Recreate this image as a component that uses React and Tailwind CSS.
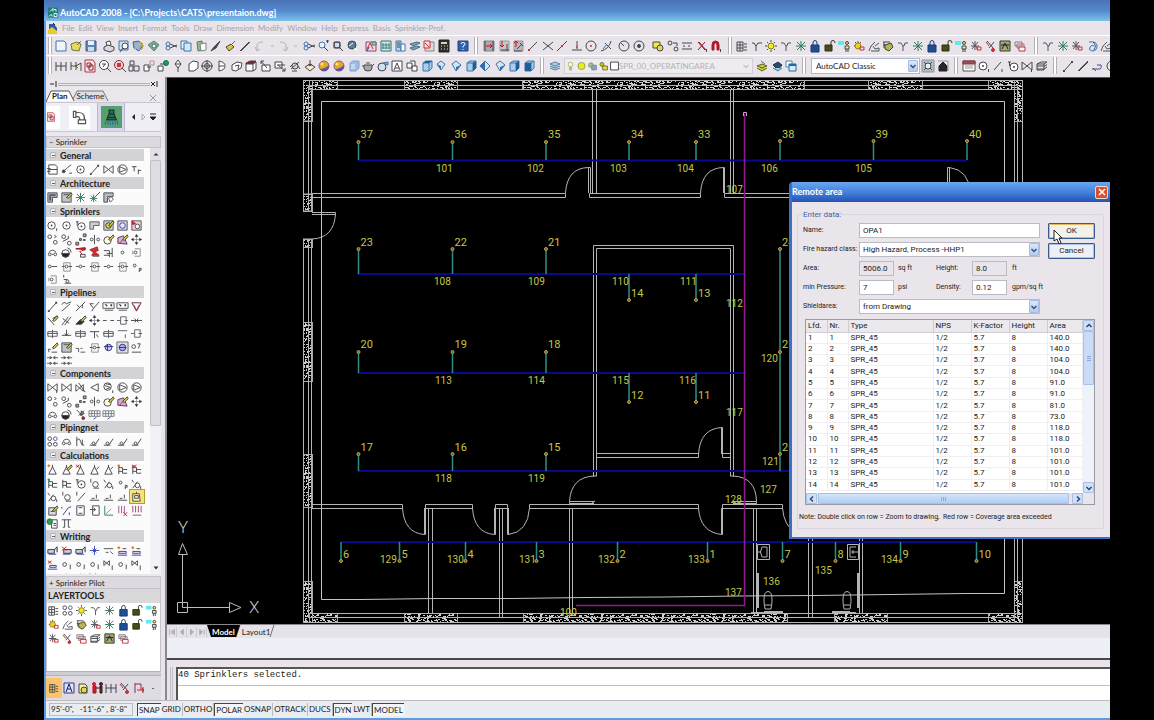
import React, { useState } from 'react';
import classNames from 'clsx';

const circle = (x, y, r) => `M${x - r} ${y}a${r} ${r} 0 1 0 ${2 * r} 0a${r} ${r} 0 1 0 ${-2 * r} 0`;

const INK = '#46464c';
const RED = '#c8303a';
const YEL = '#d8c83a';
const TEAL = '#2f7d5f';
const BLUE = '#3f74b0';
const SKY = '#a9cdea';

// Shared pieces: [path, fill, stroke]
const PENCIL = ['M7 7L12 2L13 4L9 8Z', YEL, INK];
const SUB = ['M11.500 10v3', 'none', INK];
const CUBE = ['M3 4L6 2H12V9L9 12H3ZM3 4H9V12M9 4L12 2', SKY, BLUE];
const SHEETS = ['M2 5L6 3H12L9 5ZM2 7.500L3 7H10L12 5.500M2 10L9 10L12 8M2 5V11H9V5', 'none', INK];
const LAYERS = ['M2 3H8M2 6H8M2 9H8M2 12H8M2 3V12M8 3V12M5 3V12', 'none', INK];
const VALVE = ['M2 3V11L12 3V11Z', 'none', INK];
const CONE = ['M7 4L3 12H11ZM7 2V5', 'none', INK];
const TREE = ['M3 3V12M3 5H7M3 9H7M7 7H12M7 11H12M7 5V11', 'none', INK];

// Every glyph sits on a 14 x 14 grid
const GLYPHS = {
    new: [['M2 2H10L12 4V12H2Z', '#eef6fc', BLUE]],
    open: [['M2 5L8 3L12 5L10 12L3 11Z', '#e9d95a', '#6b7a50'], ['M8 6L12 2', 'none', BLUE]],
    save: [['M2 2H12V12H2Z', '#5c86b8', '#3b5f90'], ['M4 2H10V6H4Z', '#e8f0f8', 'none'], ['M4 8H10V12H4Z', '#cfdcec', 'none']],
    print: [['M4 3L8 2L9 6L5 7Z', '#fff', INK], ['M2 8L6 6L12 8V11L8 13L2 11Z', '#d8d8de', INK]],
    preview: [['M2 2H11V11H2Z', '#cfe3f2', BLUE], [circle(8, 7, 3), '#fff', INK], ['M6 9L3 13', 'none', INK]],
    publish: [['M2 3L8 2L12 6L8 12L3 9Z', '#8fb0dc', '#44608c'], ['M4 10L9 4', 'none', YEL], ['M8 3a4 4 0 0 1 0 8', 'none', '#c8a020']],
    dwf: [['M2 6L8 2L13 6L8 12Z', '#7fae9a', '#5d7d72'], [circle(8, 7, 2), '#fff', TEAL]],
    cut: [['M6 5L13 8M6 9L13 6', 'none', INK], [circle(4, 5, 2), 'none', BLUE], [circle(4, 9, 2), 'none', BLUE]],
    copy: [['M2 2H8V10H2Z', '#e4f0fa', BLUE], ['M5 4H12V12H5Z', '#d5e8f6', BLUE]],
    paste: [['M3 3L8 2L9 11L4 12Z', '#9fb89a', '#5c7a60'], ['M6 5L12 4V11L7 12Z', '#fff', '#6a8a78']],
    brush: [['M3 12L6 8L12 2L8 9Z', '#4a4a50', INK]],
    match: [['M3 8L8 5L11 8L6 12Z', YEL, INK], ['M8 6L12 2', 'none', '#a05020']],
    pen: [['M2 12L11 3M3 12L6 9', 'none', INK], ['M5 10L12 3', 'none', INK]],
    undo: [['M4 12V7Q4 3 10 3M2 8L4 12L7 10', 'none', '#b5b1b8']],
    redo: [['M10 12V7Q10 3 4 3M12 8L10 12L7 10', 'none', '#b5b1b8']],
    tiny: [['M6 7H9', 'none', '#b5b1b8']],
    zoomin: [[circle(6, 6, 3), '#eaf2fa', BLUE], ['M8 8L12 12M10 2H13M11.500 1V4', 'none', INK]],
    zoomw: [[circle(6, 6, 3), '#cfe0ef', INK], ['M8 8L12 12M3 3H9V9H3Z', 'none', INK]],
    zoomp: [[circle(7, 6, 4), '#5d7d92', '#2f4a5c'], ['M9 9L13 12M4 7L8 4', 'none', '#fff']],
    props: [['M2 3H12V12H2Z', '#f0d8e0', '#8a4a6a'], ['M3 10L6 4L9 10', 'none', RED], ['M8 3H12V6H8Z', YEL, BLUE], ['M3 12L5 8', 'none', '#3038b0']],
    center: [['M2 2H12V12H2Z', '#cfe8e0', '#3c6c6c'], ['M4 4V10M7 4V10M10 4V10M3 6H11M3 9H11', 'none', '#3c8080']],
    toolp: [['M3 2H8V12H3Z', '#b8d4ec', BLUE], ['M8 5H12V12H8Z', '#fff', BLUE], ['M4 4H7M4 6H7M4 8H7', 'none', INK]],
    sheetset: [['M2 5L9 3L12 4L5 7ZM2 9L9 7L12 8L5 11Z', '#7fa6b8', '#466a80']],
    markup: [['M3 3H12V12H3Z', '#e0d8dc', '#888'], ['M2 2H8V9H2Z', '#fbe0e0', RED], ['M3 4L7 8', 'none', RED]],
    calc: [['M2 1H12V13H2Z', '#2e2e2a', '#222'], ['M4 3H10V5H4Z', '#d8d8b0', 'none'], ['M4 7H5M7 7H8M10 7H11M4 10H5M7 10H8M10 10H11', 'none', '#ddd']],
    help: [['M2 2H12V12H2Z', '#2f62b0', '#1f4280'], ['M5 5Q5 3.500 7 3.500T9 5Q9 6.500 7 7V8.500M7 10V11', 'none', '#fff']],
    temp: [['M2 2H12V12H2Z', '#a9a9ae', '#888'], ['M3 2V12M11 2V12', 'none', INK], ['M4 7H10M8 5L10 7L8 9', 'none', '#d01020']],
    from: [['M3 2H12V12H3Z', '#c8c4ca', '#999'], ['M4 11H12M10 5V12', 'none', INK], ['M5 2V8M3 6L5 8L7 6', 'none', '#d01020']],
    from2: [['M3 2H12V12H3Z', '#b9b7bd', '#999'], ['M3 12H11M9 4L12 7', 'none', INK], ['M5 2V8M3 4L5 2L7 4', 'none', '#d01020'], ['M6 10L10 6', 'none', INK]],
    endp: [['M3 11L11 3', 'none', INK], ['M2 10H4V12H2Z', RED, 'none']],
    inter: [['M2 3L12 11M12 3L2 11', 'none', INK]],
    mid: [['M2 12L12 2', 'none', INK], ['M6 6H8V8H6Z', RED, 'none']],
    perp: [['M7 2V10M2 11H12', 'none', INK], ['M6 8H8', 'none', RED]],
    circ: [[circle(7, 7, 5), 'none', INK], [circle(7, 7, 1), RED, 'none']],
    circsm: [[circle(7, 7, 4), '#fff', INK], [circle(7, 7, 1), INK, 'none']],
    tangent: [['M2 12Q10 10 12 2M6 4L12 10', 'none', INK], ['M4 10L8 5', 'none', BLUE]],
    quad: [[circle(7, 7, 5), 'none', INK], ['M4 4L7 7', 'none', INK]],
    node: [[circle(7, 7, 5), 'none', INK], [circle(7, 7, 1.5), INK, INK]],
    ins: [['M2 3H9V9H2Z', '#f0e84a', INK], [circle(9, 9, 3), '#e0d860', INK]],
    near: [[circle(4, 4, 2), 'none', INK], [circle(10, 10, 2), 'none', INK], ['M7 4H11V7', 'none', INK]],
    par: [['M2 4H12M2 10H12M3 7H5M8 7H10', 'none', INK]],
    none: [['M3 3L10 11M10 3L3 11', 'none', '#a01020'], ['M4 3L11 11', 'none', '#a01020'], SUB],
    magnet: [['M3 11V6Q3 2 6.500 2T10 6V11H8V6Q8 4 6.500 4T5 6V11Z', '#b81828', '#a81828'], SUB],
    layer: [LAYERS, ['M9 5H12M9 8H12M9 11H12', 'none', INK]],
    layerplus: [['M2 4H4L6 7L8 4H12M6 7V12', 'none', INK]],
    sun: [[circle(7, 7, 3), '#f4ec20', '#807818'], ['M7 1V3M7 11V13M1 7H3M11 7H13M3 3L4 4M10 10L11 11M11 3L10 4M4 10L3 11', 'none', '#4a4a28']],
    branch: [['M2 4H5L7 7H8L9 4H12M7 7V12', 'none', '#55555c']],
    snow: [['M7 2V12M2 7H12M3 3L11 11M11 3L3 11', 'none', TEAL]],
    lock: [['M3 6H11V13H3Z', '#1f4e96', '#163a70'], ['M5 6V4Q5 1.500 7 1.500T9 4V6', 'none', '#163a70']],
    unlock: [['M2 6H9V12H2Z', '#4a4a1c', '#2e2e14'], ['M8 6V3Q8 1.500 10 1.500T12 4', 'none', '#3a3a1a']],
    person: [['M1 2H7V6H1Z', '#62e8f0', 'none'], [circle(10, 4, 1.5), '#ece050', INK], ['M8 7H12V10H8ZM9 10V13M11 10V13', '#e8e8b0', INK]],
    sunr: [[circle(6, 7, 3), '#f0d020', '#a08018'], ['M6 2V4M2 7H3M3 3L4 4M9 3L8 4', 'none', '#705010'], ['M8 8H12V11H8Z', 'none', RED]],
    hands: [['M2 12L4 7L8 3M4 12H12V9L8 10L6 7M8 7L12 4', 'none', '#55555c']],
    merge: [['M2 3H9M2 6H9M3 3V9', 'none', INK], ['M4 6L10 4L12 8L8 12L4 10Z', '#b8b458', '#44441c']],
    snowr: [['M6 2V11M2 7H10M3 3L9 10M9 3L3 10', 'none', '#54545c'], ['M8 8H12V11H8Z', 'none', RED]],
    kill: [['M3 2L10 10M10 3L5 9', 'none', INK], [circle(9, 11, 1.5), RED, RED], ['M2 3L5 7', 'none', RED]],
    walk: [['M2 2H12V12H2Z', '#a0a878', '#3a3a20'], ['M4 10L7 4L10 10M3 6H11', 'none', '#222']],
    sheetr: [['M2 3H9V7H2ZM4 5H11V9H4Z', '#f0e4e8', '#8a7a80'], ['M6 8H12V12H6Z', '#fff', RED]],
    sheets: [SHEETS],
    swirl: [['M4 3Q12 2 12 7T7 12Q3 11 5 8T9 7', 'none', BLUE], ['M8 3Q12 6 9 11', 'none', '#405068']],
    dim: [['M2 3V12M12 3V12M7 3V12M2 7H12', 'none', INK]],
    dimv: [['M2 3V11M7 3V11M2 7H7L12 4M12 4V12', 'none', INK], ['M7 7L9 9', 'none', '#806818']],
    redsheet: [['M2 1H10L12 4V13H2Z', '#fbeaea', '#b03040'], ['M4 4H8V8H4ZM6 6H10V11H6Z', 'none', '#882030']],
    zoomx: [[circle(6, 6, 4.5), '#fff', INK], ['M9 9L13 13M4 5H8M5 8L7 5', 'none', INK]],
    zoomred: [[circle(6, 6, 4.5), '#f4d0d0', '#8a2a30'], ['M9 9L13 13', 'none', INK], ['M4 4H8V8H4Z', '#c83840', 'none']],
    stack: [['M3 2H7V6H3ZM2 7H6V12H2ZM7 7H12V12H7Z', '#e8e4ea', INK]],
    plus: [['M2 6H7V12H2ZM5 8H9', '#fff', INK], ['M8 2H12V6H8Z', 'none', '#b89090']],
    plusg: [['M2 7H7V12H2Z', '#fff', INK], [circle(10, 4, 2.5), '#1f9a60', '#14724a'], ['M4 5H8', 'none', INK]],
    pin: [['M7 1L10 5L7 9L4 5ZM7 9V13M4 5H10', '#fff', INK]],
    box: [['M3 5L7 2L12 3V9L8 12H3Z', '#fff', INK]],
    target: [[circle(7, 7, 5), 'none', INK], [circle(7, 7, 2.5), 'none', INK], ['M7 1V13M1 7H13', 'none', INK]],
    half: [['M4 2V12Q10 11 10 7T4 2ZM4 7H9', '#fff', INK]],
    boxes: [['M2 6L7 3L12 4L11 9L6 12L2 11ZM5 7L9 6L8 10', '#fff', INK]],
    boxred: [['M2 4L6 2H12L9 5H2Z', '#8a2028', INK], ['M2 5H9V12H2ZM9 5L12 3V10L9 12', '#fff', INK]],
    edit1: [['M3 6H11V12H3Z', '#fff', INK], ['M2 2L8 9M2 2V5M2 2H5', 'none', INK]],
    edit2: [['M2 3H9V9H2Z', '#fff', INK], ['M5 6L12 12M12 9V12H9M4 6H12', 'none', INK]],
    gear: [[circle(7, 7, 3), '#ddd', INK], ['M3 10L11 3M4 12H9M5 5L2 8M10 7L12 10', 'none', INK]],
    tray: [['M2 8L7 5L12 8L7 12Z', '#f3ebc0', INK], ['M7 1V7M5 5L7 7L9 5', 'none', INK]],
    ball: [[circle(7, 7, 5), '#e8a81c', '#8a5a90'], ['M3 10Q8 10 12 6Q12 12 7 12Q4 12 3 10Z', '#5a50b0', 'none'], [circle(5, 5, 1.5), '#fbe68a', 'none']],
    cubef: [['M3 4L6 2H12V9L9 12H3Z', '#9fbce8', '#7fa0d8'], ['M4 5H8V10H4Z', '#c4d8f4', 'none']],
    pot: [['M3 6H11V9Q11 12 7 12T3 9ZM5 4H9M1 7H3M11 7L13 5', '#a8a8a8', INK]],
    orb: [[circle(6, 8, 4), '#cfe0f0', INK], ['M7 4L12 3V6Z', '#7fc8e0', BLUE]],
    letterA: [['M2 2H12V12H2Z', '#fff', INK], ['M4 11L7 4L10 11M5 9H9', 'none', INK]],
    cubes: [['M2 4H7V9H2ZM5 2H10V7M7 7H12V12H7Z', '#fff', INK]],
    view1: [CUBE, ['M3 4L6 2H12L9 4Z', '#1f5f98', 'none']],
    view2: [['M3 5L7 2L11 5L7 11Z', '#d4e6f4', BLUE], ['M3 5L7 11L7 7Z', '#2f6fb0', 'none']],
    view3: [['M3 5L7 2L12 6L7 12Z', '#d4e6f4', BLUE], ['M12 6L7 12L7 8Z', '#2f6fb0', 'none']],
    view4: [CUBE, ['M9 4L12 2V9L9 12Z', '#1f5f98', 'none']],
    view5: [['M7 2L12 7L7 12L2 7Z', '#d4e6f4', BLUE], ['M2 7L7 2V12Z', '#2f6fb0', 'none']],
    view6: [CUBE, ['M3 4H9V12H3Z', '#1f5f98', 'none']],
    bulb: [[circle(7, 5, 3), '#fbf7c0', '#b0a860'], ['M6 9H8V12H6Z', '#ddd', '#888']],
    sunbig: [[circle(7, 7, 4.5), '#e6f020', '#88903a']],
    lockg: [[circle(5, 6, 3), '#a8c0a8', '#708878'], ['M6 6H12V12H6Z', '#88a0b0', '#7888a0']],
    locky: [[circle(5, 5, 2.5), '#c8c820', '#606010'], ['M6 7H12V12H6Z', '#e0dc50', '#606010']],
    swatch: [['M2 2H12V12H2Z', '#fff', '#222']],
    laystack: [['M2 5L7 3L12 5L7 7ZM2 7L7 9L12 7M2 9L7 11L12 9', '#b8d0e0', '#5a80a0']],
    layback: [['M2 7L7 5L12 7L7 9ZM2 9L7 12L12 9', '#c8c840', '#606020'], ['M6 2L10 5', 'none', BLUE]],
    laydark: [['M3 6L8 3L12 6L8 11Z', '#2c4a70', '#1c3350'], ['M3 9L8 12L12 9', '#9cc', BLUE]],
    wins: [['M2 2H8V8H2Z', '#fff', '#4888b8'], ['M5 5H12V12H5Z', '#d8ecf8', '#2068a8'], ['M5 5H12V7H5Z', '#2068a8', 'none']],
    gearbox: [['M1 1H13V13H1Z', '#b4c0cc', '#8a949e'], [circle(7, 7, 3), '#eee', INK], ['M3 3L5 5M11 3L9 5M3 11L5 9M11 11L9 9', 'none', INK]],
    house: [['M3 7L7 3L11 7V12H3Z', '#26262a', '#222'], ['M2 2H12V12', 'none', '#999']],
    cal: [['M1 2H13V12H1Z', '#fff', '#555'], ['M1 2H13V5H1Z', '#a05058', '#803a40'], ['M3 7H11M3 9H11', 'none', '#999']],
    circs: [[circle(6, 7, 4), '#fff', INK], [circle(6, 7, 1), INK, 'none'], SUB],
    circt: [[circle(8, 8, 4), '#fff', INK], [circle(8, 8, 1), INK, 'none'], ['M2 3H5M3.500 3V7', 'none', INK]],
    lines: [['M3 11L10 3', 'none', INK], ['M11 10V13', 'none', INK]],
    line: [['M3 12L11 3', 'none', INK], ['M2 11H4V13H2ZM10 2H12V4H10Z', INK, 'none']],
    bold: [['M2 12L12 2M3 12L12 3', 'none', INK]],
    valve: [VALVE],
    valves: [VALVE, SUB],
    hook: [['M3 9L6 12M2 10H10Q12 9 11 6H7', 'none', '#405080']],
    sheet: [['M3 2H10L12 4V12H3ZM3 7H12M1 6H5M1 9H5', '#fff', INK]],
    nodes: [['M3 10L8 5L12 2', 'none', INK], [circle(4, 9, 1.5), INK, INK], ['M10 11H13', 'none', INK]],
    circplus: [[circle(7, 7, 5), '#fff', INK], ['M4 4V10L11 7Z', 'none', INK]],
    tr: [['M2 4H7M4.500 4V9M9 7V12M9 8H12', 'none', INK]],
    room: [['M2 2H12V7H7V12H2ZM4 4H10V5H5V10H4Z', '#b8bcc0', '#4c5058']],
    roomy: [['M2 2H12V12H7L2 12ZM4 4H10', '#c0c4c8', '#4c5058'], PENCIL],
    stary: [['M6 4V12M2 8H10M3 5L9 11M9 5L3 11', 'none', TEAL], ['M8 6L13 1', 'none', '#a02020']],
    room2: [['M2 2H12V6H6V12H2Z', '#b8bcc0', '#4c5058'], ['M7 8L10 6L12 9L9 12Z', '#fff', '#4c5058']],
    ell: [['M2 3H12V7H6V11H2Z', '#c9cdd0', '#5b5f66']],
    roomc: [['M2 2H12V12H2Z', '#d5d5e0', '#50505a'], [circle(7, 7, 3), '#e8e8ff', '#3c3ca0']],
    roomcy: [['M2 2H12V12H2Z', '#d5d5d0', '#50505a'], [circle(7, 7, 3), '#d8d860', '#30301c'], PENCIL],
    roomr: [['M2 2H12V12H2Z', '#e5d5d5', '#50505a'], [circle(8, 8, 2.5), '#fff', INK], ['M2 2L6 5L3 6Z', '#d02020', '#d02020']],
    pair: [[circle(4, 4, 2), '#fff', INK], [circle(10, 10, 2), '#fff', INK], ['M9 2L11 4L9 5', 'none', INK]],
    pair2: [[circle(4, 4, 2), '#fff', INK], [circle(10, 11, 2), '#fff', INK], ['M3 9L9 6M9 3V6', 'none', INK]],
    diag: [['M2 10H5V13H2ZM6 6H8V8H6ZM10 1H13V4H10ZM10 7H12V8H10Z', '#aaa', INK]],
    mirror: [['M7 2V12', 'none', INK], [circle(4, 7, 1.5), '#fff', INK], [circle(11, 7, 1.5), '#fff', INK]],
    circy: [[circle(6, 8, 4), '#fbfbe0', INK], PENCIL],
    paint: [['M2 11V5L8 3L12 12Z', '#c8b0d8', '#60305c'], ['M3 12L12 2', 'none', RED], PENCIL],
    move: [['M7 2V12M2 7H12', 'none', '#9a9aa0'], ['M5 4L7 1L9 4ZM5 10L7 13L9 10ZM4 5L1 7L4 9ZM10 5L13 7L10 9Z', '#333', 'none']],
    glasses: [['M3 7Q7 2 11 7', 'none', INK], [circle(4, 9, 1.5), '#fff', INK], [circle(10, 9, 1.5), '#fff', INK], ['M6 9H8', 'none', INK]],
    ballh: [[circle(6, 8, 4), '#fff', INK], ['M2 8H10Q10 12 6 12T2 8Z', '#222', INK], ['M8 2Q12 3 12 7', 'none', INK]],
    redtri: [['M2 3L12 2V4L6 6L11 11', 'none', '#c82028'], ['M2 3L12 2V4Z', '#d02028', '#a81820'], ['M7 9H12V12H7Z', '#eee', INK]],
    redflag: [['M2 4L10 1L11 5L7 6L12 10H4L6 7Z', '#d03038', '#a82028'], ['M5 11H12', 'none', INK]],
    tee: [['M2 5H8M2 10H8M8 5V12M11 2V12M5 8H11', 'none', INK]],
    dot: [[circle(7, 7, 1.5), '#fff', INK]],
    bracket: [['M5 3H11V11H5M3 5V9', 'none', '#8a8a90'], [circle(6, 7, 1.5), '#fff', INK]],
    dash: [[circle(4, 7, 1.5), '#fff', INK], ['M6 7H12', 'none', INK]],
    dashc: [[circle(7, 7, 1.5), '#fff', INK], ['M2 7H5M9 7H12', 'none', INK]],
    dashb: [['M4 3H11V12H4Z', 'none', '#8a8a90'], [circle(7, 7, 1.5), '#fff', INK], ['M2 7H5M9 7H13', 'none', INK]],
    dotp: [[circle(5, 6, 1.5), '#fff', INK], ['M10 9V13M10 9H12V11H10', 'none', INK]],
    onoff: [['M4 2V5M4 7H8M5 11H12', 'none', INK], [circle(8, 9, 1.5), '#fff', INK]],
    link2: [['M2 12L11 4M2 5Q4 1 7 4L12 2', 'none', INK]],
    link3: [['M2 12L8 6L12 2M3 5L6 8M9 5V9', 'none', INK]],
    link4: [['M2 4L6 9L12 2M6 9L4 12M2 4H6', 'none', INK]],
    plug: [['M1 3H13V9H1ZM3 5H5M9 5H11M3 11H12', '#fff', '#50505a'], [circle(5, 6, 1), INK, 'none'], [circle(10, 6, 1), INK, 'none']],
    vred: [['M2 3H12L7 12Z', '#fff', '#503038'], ['M4 5L7 11L10 5', 'none', RED]],
    split: [['M2 4L9 12M7 5L12 2', 'none', INK], PENCIL],
    offset: [['M2 12L9 3M5 12L12 3M3 5L10 10', 'none', INK]],
    brushp: [['M2 11L7 6L11 8L8 11Z', '#303030', INK], PENCIL],
    gap: [['M1 7H5M9 7H13', 'none', INK]],
    gapb: [['M1 7H5M9 7H13M5 3H11V11H5Z', 'none', '#5c5c64']],
    arrows: [['M1 7H13M5 5L7 7L5 9M9 5L7 7L9 9', 'none', INK]],
    weld: [['M2 5H12V10H2ZM7 3V12M1 7H13', 'none', '#5c5c64']],
    tup: [['M7 3V9M2 9H12M5 7L7 9L9 7', 'none', INK]],
    tdown: [['M2 5H12M7 5V12M9 8L11 11', 'none', INK]],
    dashs: [['M2 4H12M10 8V12', 'none', '#5c5c64']],
    numy: [['M2 9H5M3 9V12M6 12H12M7 9L9 7', 'none', INK], PENCIL],
    num: [['M2 8H5V12M7 12H12M7 8H9', 'none', '#50505a']],
    pump: [[circle(7, 7, 3.5), '#d0d0f0', '#303080'], ['M2 6H12M6 4V10', 'none', '#303080']],
    pumpb: [['M1 1H13V13H1Z', '#dcdcec', '#666'], [circle(7, 7, 3.5), '#b0b0e0', '#303080'], ['M3 7H11', 'none', '#303080']],
    o7: [['M2 12H12M8 3H11L9 8', 'none', INK], [circle(4, 6, 2), '#fff', INK]],
    swap: [['M1 4H5M9 4H13M1 10H5M9 10H13', 'none', '#5c5c64'], ['M4 2L7 4L4 6ZM10 2L7 4L10 6ZM4 8L7 10L4 12ZM10 8L7 10L10 12Z', '#5c5c64', 'none']],
    valvex: [['M2 4V11L10 4V11Z', '#fff', INK], ['M5 2L12 12', 'none', INK]],
    tri: [['M11 3V11L3 7Z', '#fff', INK]],
    pumps: [[circle(6, 6, 4), '#fff', INK], ['M3 5L9 7L4 9M4 3L9 4', 'none', INK], SUB],
    tools: [['M3 2L11 11M11 3L5 8', 'none', '#b02028'], ['M8 3L11 6L7 8Z', '#40a060', INK], [circle(10, 11, 1.5), '#a03030', INK]],
    grid: [['M1 3H13V9H1ZM1 6H13M4 3V9M7 3V9M10 3V9', 'none', '#7c7c84'], ['M6 12L9 10', 'none', '#3050b0']],
    net: [[circle(4, 4, 2), '#fff', INK], [circle(10, 4, 2), '#fff', '#4a58a0'], [circle(4, 10, 2), '#fff', INK], [circle(10, 10, 2), '#fff', INK]],
    nlet: [['M3 2V12M3 6Q6 2 7 7T11 11M9 5V11', 'none', INK]],
    slopen: [['M2 11H9M4 9L8 10L12 4', 'none', INK], [circle(6, 9, 1.5), '#fff', INK]],
    cone: [CONE, ['M9 7L12 4', 'none', INK]],
    coneo: [CONE, [circle(3, 3, 1), '#e07820', '#e07820']],
    coney: [CONE, PENCIL],
    conex: [CONE, ['M2 2L6 5M6 2L2 5', 'none', '#d02020']],
    tree: [TREE],
    treeo: [TREE, [circle(3, 3, 1), '#e07820', '#e07820']],
    treex: [TREE, ['M2 2L7 5M7 2L2 5', 'none', '#d02020']],
    treeg: [TREE, [circle(3, 3, 1), '#30a040', '#30a040']],
    onec: [['M3 2V6M6 12H12', 'none', INK], [circle(8, 8, 3), '#fff', INK]],
    oneb: [['M2 3L4 6M3 12L8 5', 'none', INK], [circle(8, 9, 2.5), '#fff', INK], SUB],
    oneline: [['M3 2V6M4 12L12 3', 'none', INK]],
    base: [['M2 11H12M4 9H7M9 5V9', 'none', INK]],
    bag: [['M3 4H10L11 12H3Z', '#fdf6c8', INK], ['M5 6H9V9H5ZM7 2V4', 'none', INK]],
    calcy: [['M3 4H11V12H3Z', '#ddd', INK], ['M5 8H9', 'none', INK], PENCIL],
    plot: [['M3 12L9 4M2 3V5M10 9V12', 'none', '#3a3a98'], ['M9 4L12 3', 'none', INK]],
    doc: [['M3 2H11V12H3Z', '#fff', INK], ['M5 4H9M5 10H9', 'none', INK]],
    docs: [['M5 2H12V12H5ZM2 6H8M6 4L8 6L6 8', '#fff', INK]],
    angle: [['M3 2V12H12', 'none', TEAL], ['M4 11L10 5', 'none', '#60b040']],
    bars: [['M3 2V10M6 2V10M9 2V10', 'none', '#a05090'], ['M8 9L12 13M12 9L8 13', 'none', '#c02030']],
    barsp: [['M3 2V9M6 2V9M9 2V9M12 2V9M3 12H12', 'none', '#a04070']],
    xls: [['M6 3H12V12H6Z', '#fff', INK], [circle(4, 5, 3), '#3a9a50', '#207838'], ['M8 7H11M8 9H11', 'none', INK]],
    pi: [['M2 3H12M5 3V11H3M9 3V11H11', 'none', INK]],
    tag: [['M2 6H9V10H2ZM9 6L12 3V9', '#d0d0d8', '#33334a'], ['M3 11H11', 'none', '#3a3a98']],
    tagx: [['M4 6H12V10H4Z', '#d0d0d8', '#33334a'], ['M2 3L7 7M7 3L2 7', 'none', '#d02020'], ['M3 11H11', 'none', '#3a3a98']],
    spark: [['M7 2V12M2 7H12M5 5L9 9M9 5L5 9', 'none', '#3a4ab0']],
    nums: [['M2 5H12M4 9H7M9 8L12 11', 'none', '#50505a']],
    label: [['M2 12H12M3 8H11V10H3Z', 'none', '#3a3a98'], [circle(3, 4, 1), '#e07820', '#e07820'], ['M7 5H11', 'none', INK]],
    labelx: [['M2 12H12M4 8H11V10H4Z', 'none', '#3a3a98'], ['M2 3L6 6M6 3L2 6', 'none', '#d02020']],
    o1: [[circle(5, 7, 2), '#fff', INK], ['M11 7V12', 'none', INK]],
    v1: [['M2 3V8L8 3V8Z', 'none', INK], ['M11 8V13', 'none', INK]],
    bluea: [['M2 2H12V12H2Z', '#dfe4f8', '#2c3890'], ['M4 11L7 3L10 11M5 8H9', 'none', '#181c60']],
    docy: [['M3 3H9L11 5V12H3Z', '#f6f2a0', INK], [circle(8, 9, 3), '#e0d840', INK]],
    men: [[circle(4, 3, 1.5), '#d02030', '#d02030'], ['M3 5H6V12H3Z', '#d02030', '#a01020'], [circle(11, 3, 1.5), '#a01020', '#222'], ['M10 5H12V12H10ZM6 7H10', '#a01020', '#222']],
    dimred: [['M3 2V12M11 6V12M3 3H9V9', 'none', '#903040'], ['M5 9H12M10 7L12 9L10 11', 'none', '#d02030']],
    elbow: [['M2 2H4V7H2ZM4 3Q12 2 11 9H7Q8 6 4 6ZM6 9H12V12H6Z', '#fff', '#555']],
    bottle: [['M5 1H9V4L11 9H3L5 4ZM5 4H9M4 7H10', '#2f6a50', '#16382a'], ['M2 10V13M4 10V13M6 10V13M8 10V13M10 10V13M12 10V13', 'none', '#2c6ab8']],
};

function Glyph({ name, className = 'w-3.5 h-3.5' }) {
    return (
        <svg viewBox="0 0 14 14" aria-hidden="true" className={classNames('shrink-0', className)}>
            {GLYPHS[name].map(([d, fill = 'none', stroke = INK], i) => (
                <path key={i} d={d} fill={fill} stroke={stroke} strokeWidth="1" />
            ))}
        </svg>
    );
}

function IconGroup({ icons, className }) {
    return (
        <div className={classNames('flex shrink-0 items-center justify-between', className)}>
            {icons.split(' ').map((name, i) => (
                <button key={i} type="button" aria-label={name} className={name === 'tiny' ? '-mx-1' : undefined}>
                    <Glyph name={name} />
                </button>
            ))}
        </div>
    );
}

const Grip = ({ className }) => (
    <div className={classNames('h-[17px] w-1 shrink-0 border-x border-[#b4b0b8] bg-white', className)} />
);

function ComboArrow() {
    return (
        <span className="pointer-events-none absolute inset-y-px right-px flex w-[10px] items-center justify-center rounded-[1px] border border-[#a5bbe0] bg-linear-to-b from-[#dbe7fb] to-[#b4cbf0]">
            <svg viewBox="0 0 8 8" className="h-2 w-2"><path d="M1.500 3L4 5.500L6.500 3" fill="none" stroke="#3c4f78" strokeWidth="1.500" /></svg>
        </span>
    );
}

const MENUS = ['File', 'Edit', 'View', 'Insert', 'Format', 'Tools', 'Draw', 'Dimension', 'Modify', 'Window', 'Help', 'Express', 'Basis', 'Sprinkler-Prof.'];

function Toolbars() {
    return (
        <div className="shrink-0 overflow-hidden bg-[#e8e4e9]">
            <div className="flex h-5 items-center border-t border-white">
                <Grip className="ml-[2px]" />
                <IconGroup className="ml-[2px] w-[44px]" icons="new open save" />
                <IconGroup className="ml-1 w-[58px]" icons="print preview publish dwf" />
                <IconGroup className="ml-1 w-[88px]" icons="cut copy paste brush match pen" />
                <IconGroup className="ml-px w-[45px]" icons="undo tiny redo tiny" />
                <IconGroup className="ml-1 w-[57px]" icons="cut zoomin zoomw zoomp" />
                <IconGroup className="ml-[5px] w-[87px]" icons="props center toolp sheetset markup calc" />
                <IconGroup className="ml-[5px] w-[14px]" icons="help" />
                <Grip className="ml-1" />
                <IconGroup className="ml-1 w-[131px]" icons="temp from from2 endp inter mid perp circ tangent" />
                <IconGroup className="ml-1 w-[29px]" icons="quad node" />
                <IconGroup className="ml-[5px] w-[72px]" icons="ins near par none magnet" />
                <Grip className="ml-[5px]" />
                <IconGroup
                    className="ml-[3px] w-[292px]"
                    icons="layer layerplus sun branch snow lock unlock person sunr hands merge branch snow lock unlock person snowr kill walk sheetr"
                />
                <Grip className="ml-[7px]" />
                <IconGroup className="ml-[3px] w-[72px]" icons="branch snow snowr swirl hands" />
            </div>
            <div className="flex h-5 items-center border-t border-white">
                <Grip className="ml-[2px]" />
                <IconGroup
                    className="ml-[2px] w-[482px]"
                    icons="dim dimv redsheet zoomx zoomred stack plus plusg pin box target half boxes boxred edit1 edit2 gear tray ball ball cubef pot orb letterA cubes view1 view2 view3 view4 view5 view3 view4 view6"
                />
                <Grip className="ml-1" />
                <IconGroup className="ml-1 w-[14px]" icons="laystack" />
                <div className="relative ml-[2px] flex h-4 w-[189px] shrink-0 items-center border border-[#d4d0d6] bg-[#efecf0]">
                    <div className="flex w-[52px] shrink-0 justify-between">
                        {['bulb', 'sunbig', 'lockg', 'locky', 'swatch'].map(n => <Glyph key={n} name={n} className="h-3 w-[11px]" />)}
                    </div>
                    <select aria-label="Layer" disabled className="block h-full min-w-0 flex-1 appearance-none bg-transparent pl-[2px] text-[8px] text-[#b5b1b8] opacity-100">
                        <option>SPR_00_OPERATINGAREA</option>
                    </select>
                    <svg viewBox="0 0 8 8" className="h-2 w-3"><path d="M1.500 3L4 5.500L6.500 3" fill="none" stroke="#b8cbe4" strokeWidth="1.500" /></svg>
                </div>
                <IconGroup className="ml-[2px] w-[43px]" icons="layback laydark wins" />
                <Grip className="ml-1" />
                <div className="relative ml-[5px] h-4 w-[109px] shrink-0 border border-[#a9b8cc] bg-white">
                    <select aria-label="Workspace" className="block h-full w-full appearance-none pl-1 text-[8px] text-[#222]">
                        <option>AutoCAD Classic</option>
                    </select>
                    <ComboArrow />
                </div>
                <IconGroup className="ml-px w-[29px]" icons="gearbox house" />
                <Grip className="ml-1" />
                <IconGroup className="ml-1 w-[87px]" icons="cal circs lines circt valves sheets" />
                <Grip className="ml-1" />
                <IconGroup className="ml-1 w-[58px]" icons="line bold hook circ" />
            </div>
        </div>
    );
}

const SECTIONS = [
    { title: 'General', height: 'h-[14px]', icons: 'sheet nodes circsm line valve circplus tr' },
    { title: 'Architecture', height: 'h-[14px]', icons: 'room roomy snow stary room2' },
    {
        title: 'Sprinklers',
        height: 'h-[67px]',
        icons: 'circs circsm circt ell roomcy roomc roomr pair pair2 diag mirror circy paint move glasses ballh redtri redflag tee dot bracket dash dashb dashc dashb dashc dashb dotp bracket onoff',
    },
    {
        title: 'Pipelines',
        height: 'h-[67px]',
        icons: 'line link2 link3 link4 plug plug vred split offset brushp move gap gapb arrows weld tup weld tdown weld dashs gapb numy roomy num dashb pump pumpb o7 swap swap',
    },
    {
        title: 'Components',
        height: 'h-[40px]',
        icons: 'valves valve valvex tri pumps circplus circplus pair pair2 diag mirror circy paint move glasses ballh tools grid grid',
    },
    { title: 'Pipingnet', height: 'h-[14px]', icons: 'net glasses nlet slopen slopen slopen slopen' },
    {
        title: 'Calculations',
        height: 'h-[67px]',
        icons: 'coneo coney conex cone cone treeo treex treeg tree circt onec oneb dotp oneb oneb onec oneline base base base bag calcy plot doc docs angle bars barsp xls pi',
    },
    {
        title: 'Writing',
        height: 'h-[40px]',
        icons: 'tag tagx tag spark nums label label labelx o1 o1 o1 v1 o1 v1 base tup tup v1',
    },
];

function PaletteSection({ title, height, icons }) {
    const [open, setOpen] = useState(true);

    return (
        <section>
            <button
                type="button"
                onClick={() => setOpen(!open)}
                className="flex h-[14px] w-full items-center border-b-2 border-white bg-[#d3d2d5] pl-1 text-[9px] leading-none font-bold text-[#222]"
            >
                <span className="mr-1 flex h-[6px] w-[6px] items-center justify-center rounded-[1px] border border-[#b0b4bc] bg-[#eef0f4]">
                    <span className="h-px w-[3px] bg-[#666]" />
                </span>
                {title}
            </button>
            {open && (
                <div className={classNames('grid grid-cols-7 content-between overflow-visible', height)}>
                    {icons.split(' ').map((name, i) => (
                        <button
                            key={i}
                            type="button"
                            aria-label={name}
                            className={classNames('h-[13px] w-[14px]', name === 'bag' && 'bg-[#f8e27a] outline outline-[#b89a30]')}
                        >
                            <Glyph name={name} className="h-[13px] w-[13px]" />
                        </button>
                    ))}
                </div>
            )}
        </section>
    );
}

const LAYER_TOOLS = 'layer net sun branch snow lock unlock person sunr hands merge snowr snow lock unlock person snowr kill sheetr sheets walk sheetr';

function Palette() {
    return (
        <aside className="flex w-[115px] shrink-0 flex-col overflow-hidden bg-[#ebe8ed] text-[8px]">
            <div className="mx-[3px] mt-[3px] flex h-[8px] shrink-0 items-center justify-between">
                <svg viewBox="0 0 8 8" className="h-2 w-2"><path d="M1 4H5M7 1V7" stroke="#222" /></svg>
                <div className="h-[3px] w-[92px] border-y border-[#b4b2b8]" />
                <svg viewBox="0 0 8 8" className="h-2 w-2"><path d="M1 2L5 6M5 2L1 6M7 1V7" stroke="#222" /></svg>
            </div>
            <div className="mt-[2px] flex h-[12px] shrink-0 items-end">
                <div className="relative">
                    <svg viewBox="0 0 66 12" className="h-3 w-[66px]">
                        <path d="M26 11L31 1H57L62 11" fill="#e0dde4" stroke="#777" />
                        <path d="M0 12L5 1H23L28 11" fill="#fbfbfd" stroke="#555" />
                    </svg>
                    <div className="absolute inset-0 flex items-center leading-none">
                        <button type="button" className="pl-[6px] font-bold">Plan</button>
                        <button type="button" className="pl-[9px]">Scheme</button>
                    </div>
                </div>
                <div className="flex flex-1 justify-end pr-1 text-[#999]">
                    <svg viewBox="0 0 8 8" className="h-2 w-2"><path d="M1 1L7 7M7 1L1 7" stroke="#999" /></svg>
                </div>
            </div>
            <div className="flex h-[30px] shrink-0 items-center border-y border-[#c9c6cf] bg-[#f0eff5]">
                <button type="button" aria-label="Valve palette" className="h-[23px] w-[14px] bg-white"><Glyph name="redsheet" className="h-4 w-2.5" /></button>
                <button type="button" aria-label="Fitting palette" className="ml-[9px] flex h-[23px] w-[21px] items-center justify-center bg-white">
                    <Glyph name="elbow" className="h-[17px] w-[17px]" />
                </button>
                <span className="ml-[7px] flex h-full w-[28px] items-center justify-center border-x border-[#b9b6d0] bg-[#d9d7ea]">
                    <button type="button" aria-label="Sprinkler palette" className="flex h-[22px] w-[21px] items-center justify-center bg-[#56a070]">
                        <Glyph name="bottle" className="h-[17px] w-[17px]" />
                    </button>
                </span>
                <svg viewBox="0 0 28 10" className="ml-[5px] h-[10px] w-7">
                    <path d="M5 2L2 5L5 8Z" fill="#222" />
                    <path d="M12 2L15 5L12 8Z" fill="none" stroke="#aaa" />
                    <path d="M20 2H26M20 5H26L23 8Z" fill="#222" stroke="#222" />
                </svg>
            </div>
            <h2 className="mt-1 flex h-[12px] shrink-0 items-center border border-[#c4c2c8] bg-[#dcdade] pl-[2px]">– Sprinkler</h2>
            <div className="flex min-h-0 flex-1 bg-[#fbfbfc]">
                <div className="min-w-0 flex-1 overflow-hidden pt-px pr-[6px]">
                    {SECTIONS.map(section => <PaletteSection key={section.title} {...section} />)}
                </div>
                <div className="flex w-[11px] flex-col bg-[#f2f1f5]">
                    <button type="button" aria-label="Scroll up" className="flex h-3 items-center justify-center bg-[#e2e0e6]">
                        <svg viewBox="0 0 8 8" className="h-2 w-2"><path d="M1.500 5.500L4 3L6.500 5.500Z" fill="#333" /></svg>
                    </button>
                    <div className="h-[266px] rounded-[1px] border border-[#c0bec6] bg-[#dedce3]" />
                    <button type="button" aria-label="Scroll down" className="mt-auto flex h-3 items-center justify-center">
                        <svg viewBox="0 0 8 8" className="h-2 w-2"><path d="M1.500 2.500L4 5.500L6.500 2.500Z" fill="#333" /></svg>
                    </button>
                </div>
            </div>
            <h2 className="mt-[2px] flex h-[13px] shrink-0 items-center border border-[#c4c2c8] bg-[#dcdade] pl-[2px]">+ Sprinkler Pilot</h2>
            <div className="h-[82px] shrink-0 border-x border-[#c4c2c8] bg-white">
                <h3 className="flex h-[14px] items-center bg-[#d9d8db] pl-px text-[9px] font-bold text-[#222]">LAYERTOOLS</h3>
                <div className="grid h-[42px] w-[112px] grid-cols-8 content-between pt-px">
                    {LAYER_TOOLS.split(' ').map((name, i) => (
                        <button key={i} type="button" aria-label={name} className="h-[13px] w-[14px]">
                            <Glyph name={name} className="h-[13px] w-[13px]" />
                        </button>
                    ))}
                </div>
            </div>
            <div className="h-[5px] shrink-0 border-y border-[#b5b3ba] bg-[#cfcdd4]" />
            <div className="flex h-[24px] shrink-0 items-center bg-[#dedbe2]">
                <button type="button" aria-label="Layers" className="flex h-5 w-4 items-center justify-center bg-[#fbc46a]"><Glyph name="layer" className="h-3 w-3" /></button>
                <IconGroup className="w-[84px]" icons="bluea docy men dim kill dimred" />
                <span className="ml-[6px] h-px w-[2px] bg-[#666]" />
            </div>
        </aside>
    );
}

// Sprinkler heads: [x, y, pipe y, label, label baseline]
const HEADS = [
    [358.5, 142, 160, '37', 138], [452.5, 142, 160, '36', 138], [546, 142, 160, '35', 138],
    [629, 142, 160, '34', 138], [696, 142, 160, '33', 138], [780, 141, 160, '38', 138],
    [873.5, 141, 160, '39', 138], [967, 141, 160, '40', 138],
    [358.5, 249, 274, '23', 246], [452.5, 249, 274, '22', 246], [546, 249, 274, '21', 246], [780, 249, 352, '24', 246],
    [629, 300, 274, '14', 297], [696, 300, 274, '13', 297],
    [358.5, 352, 373, '20', 348], [452.5, 352, 373, '19', 348], [546, 352, 373, '18', 348], [780, 352, 454, '25', 348],
    [629, 402, 373, '12', 399], [696, 402, 373, '11', 399],
    [358.5, 454, 471, '17', 451], [452.5, 454, 471, '16', 451], [546, 454, 471, '15', 451], [780, 454, 471, '26', 451],
    [341, 561, 542, '6', 558], [399.5, 561, 542, '5', 558], [465.5, 561, 542, '4', 558], [536.5, 561, 542, '3', 558],
    [617.5, 561, 542, '2', 558], [707.5, 561, 542, '1', 558], [782.5, 561, 542, '7', 558], [835.5, 561, 542, '8', 558],
    [900.5, 561, 542, '9', 558], [976.5, 561, 542, '10', 558],
];

const PIPE_LABELS = [
    ['101', 436, 172], ['102', 527, 172], ['103', 610, 172], ['104', 677, 172], ['106', 761, 172], ['105', 855, 172],
    ['107', 726, 193], ['108', 434, 285], ['109', 528, 285], ['110', 612, 285], ['111', 680, 285], ['112', 726, 307],
    ['113', 435, 384], ['114', 528, 384], ['115', 612, 384], ['116', 679, 384], ['117', 726, 416], ['118', 435, 482],
    ['119', 528, 482], ['120', 761, 362], ['121', 762, 465], ['127', 760, 493], ['128', 725, 503], ['129', 380, 563],
    ['130', 447, 563], ['131', 519, 563], ['132', 598, 563], ['133', 688, 563], ['134', 881, 563], ['135', 815, 574],
    ['136', 763, 585], ['137', 725, 596], ['100', 560, 616],
];

// Insulated wall pieces: [x, y, width, height]
const HATCHES = [
    [303, 80, 9, 41], [303, 194, 9, 17], [303, 239, 9, 8], [303, 322, 9, 59], [303, 454, 9, 53], [303, 581, 9, 41],
    [309, 80, 28, 9], [404, 80, 53, 9], [522, 80, 282, 9], [868, 80, 54, 9], [988, 80, 34, 9], [1014, 80, 8, 41],
    [309, 613, 28, 9], [404, 613, 53, 9], [523, 613, 264, 9], [834, 613, 53, 9], [988, 613, 34, 9], [1014, 581, 8, 41],
];

// Scattered one pixel marks for the insulation fill
const makeSpecks = (count) => {
    let seed = 17;
    const next = (max) => {
        seed = (seed * 16807) % 2147483647;
        return seed % max;
    };
    return Array.from({ length: count }, () => [next(61), next(37), 1 + next(2)]);
};

const SPECKS = makeSpecks(620);

const WALLS = [
    // outer shell
    'M303.500 211V80.500H1022.500V622.500H303.500V239', 'M308.500 211V85.500H1017.500V617.500H308.500V239', 'M311.500 211V89.500H1014.500V613.500H311.500V239',
    'M303 211H312M303 239H312M303 121H312M303 194H312',
    // upper corridor wall
    'M312 193.500H565.500V197.500H312M589.500 193.500H700.500V197.500H589.500ZM1014 193.500H724.500V197.500H1014',
    'M592.500 89V193M596.500 89V193M730.500 89V193M733.500 89V193',
    // core room
    'M593.500 476V245.500H733.500V476M596.500 476V248.500H730.500V476M593 476H597M730 476H734',
    'M596 453.500H698.500V457.500H596M730 453.500H722.500V457.500H730',
    // lower corridor wall
    'M312 504.500H402.500V508.500H312M425.500 504.500H472.500V508.500H425.500ZM495.500 504.500H507.500V508.500H495.500ZM529.500 504.500H698.500V508.500H529.500ZM722.500 504.500H782.500V508.500H722.500Z',
    'M428.500 508V613M432.500 508V613M499.500 508V617M502.500 508V617M569.500 508V613M572.500 508V613M753.500 508V613M756.500 508V613M808.500 508V617M812.500 508V617M859.500 508V613M862.500 508V613',
    // doors
    'M312 212.500H335.500V214.500H312M335.500 214Q334 238 312 239',
    'M588.500 193V167.500H590.500V193M588.500 167.500Q567 168 565.500 193',
    'M723.500 193V167.500H724.500V193M723.500 167.500Q702 168 700.500 193',
    'M947.500 193V167.500H949.500V193M949.500 167.500Q969 170 970.500 193',
    'M721.500 454V427.500H722.500V454M721.500 427.500Q700 429 698.500 454',
    'M594 501.500H569.500V503.500H594M569.500 501.500Q571 477 594 476M592 503L595 501',
    'M733 501.500H756.500V503.500H733M756.500 501.500Q756 477 733 476',
    'M424.500 508V534.500H425.500V508M402.500 508Q404 533 424.500 534.500',
    'M494.500 508V534.500H495.500V508M472.500 508Q474 533 494.500 534.500',
    'M507.500 508V534.500H508.500V508M508.500 534.500Q528 532 529.500 508',
    'M721.500 508V534.500H722.500V508M698.500 508Q700 532 721.500 534.500',
    'M782.500 508Q784 526 795 532',
    // washrooms
    'M757.500 544.500H769.500V559.500H757.500ZM767 547H762Q759 552 762 557H767ZM757 552H761',
    'M847.500 544.500H858.500V559.500H847.500ZM856 547H850V557H856M851 552H858M853 550V554',
    'M757.500 573V608M758.500 573V608M857.500 573V608M858.500 573V608',
    'M764 611.500H783M751 612.500H783M832 612.500H856M832 611.500H850',
    'M764 600Q764 591.500 768 591.500T772 600Q772 605 771 609H765Q764 605 764 600ZM765 605H771M843 600Q843 591.500 847 591.500T851 600Q851 605 850 609H844Q843 605 843 600ZM844 605H850',
];

function FloorPlan() {
    return (
        <svg viewBox="167 78 943 546" preserveAspectRatio="xMinYMin slice" className="h-full w-full" role="img" aria-label="Floor plan">
            <defs>
                <pattern id="insulation" width="61" height="37" patternUnits="userSpaceOnUse">
                    {SPECKS.map(([x, y, w], i) => <rect key={i} x={x} y={y} width={w} height="1" fill="#cfcfcf" />)}
                </pattern>
            </defs>
            {HATCHES.map(([x, y, w, h], i) => (
                <rect key={i} x={x + 0.5} y={y + 0.5} width={w} height={h} fill="url(#insulation)" stroke="#a8a8a8" />
            ))}
            <g fill="none" stroke="#b4b4b4" strokeWidth="1">
                {WALLS.map((d, i) => <path key={i} d={d} />)}
                <path stroke="#c4c4c4" d="M321.500 599.500V101.500H1004.500V593.500H966L890 594.500L815 595.500L740 596L664 597L586 597.500L512 598.500L435 598.500L360 599.500Z" />
            </g>
            <path fill="none" stroke="#08088c" strokeWidth="2" d="M358 160.500H967M358 274H744M358 373H744M358 471H795M341 542H976" />
            <path fill="none" stroke="#94188e" strokeWidth="1.500" d="M744.500 114V605.500H576" />
            <path fill="none" stroke="#c8a8c8" d="M743.500 116V112.500H746.500V116" />
            {HEADS.map(([x, y, pipe, label, base]) => (
                <g key={label}>
                    <path stroke="#2f8f86" strokeWidth="1.500" d={`M${x} ${y}V${pipe}`} />
                    <circle cx={x} cy={y} r="1.500" fill="#6a5a20" stroke="#c0a850" />
                    <text x={x + 2} y={base} fill="#c4c844" className="font-[Roboto,sans-serif] text-[11px]">{label}</text>
                </g>
            ))}
            <g fill="#c4c844" className="font-[Roboto,sans-serif] text-[10px]">
                {PIPE_LABELS.map(([label, x, y]) => <text key={label} x={x} y={y}>{label}</text>)}
            </g>
            {/* UCS icon */}
            <g fill="none" stroke="#bcbcbc">
                <path d="M177.500 602.500H187.500V612.500H177.500ZM182.500 607.500V554M182.500 607.500H229M178.500 554.500H187.500L182.500 543.500ZM229.500 602.500V612.500L241 607.500Z" />
            </g>
            <g fill="#c4c4c4" className="font-[Roboto,sans-serif] text-[17px] font-light">
                <text x="178" y="533">Y</text>
                <text x="249" y="613">X</text>
            </g>
        </svg>
    );
}

const AREAS = ['140.0', '140.0', '104.0', '104.0', '91.0', '91.0', '81.0', '73.0', '118.0', '118.0', '101.0', '101.0', '101.0', '101.0'];

function ScrollButton({ d, label, className }) {
    return (
        <button type="button" aria-label={label} className={classNames('flex h-[11px] w-[11px] shrink-0 items-center justify-center rounded-[1px] border border-[#a9c0e6] bg-[#cfdff8]', className)}>
            <svg viewBox="0 0 8 8" className="h-2 w-2"><path d={d} fill="none" stroke="#33466e" strokeWidth="1.500" /></svg>
        </button>
    );
}

function SprinklerTable() {
    return (
        <div className="mt-[5px] w-[290px] border border-[#9a9aa0] bg-white">
            <div className="flex h-[173px]">
                <div className="min-w-0 flex-1 overflow-hidden">
                    <table className="h-[171px] w-full table-fixed border-collapse text-left leading-[10px] whitespace-nowrap">
                        <colgroup>
                            <col className="w-[21px]" />
                            <col className="w-[21px]" />
                            <col className="w-[85px]" />
                            <col className="w-[38px]" />
                            <col className="w-[38px]" />
                            <col className="w-[38px]" />
                            <col />
                        </colgroup>
                        <thead>
                            <tr className="h-3 bg-[#ece9ee]">
                                {['Lfd.', 'Nr.', 'Type', 'NPS', 'K-Factor', 'Height', 'Area'].map(h => (
                                    <th key={h} className="border-r border-b border-[#cfccd2] py-0 pr-0 pl-[2px] font-normal">{h}</th>
                                ))}
                            </tr>
                        </thead>
                        <tbody>
                            {AREAS.map((area, i) => (
                                <tr key={i}>
                                    {[i + 1, i + 1, 'SPR_45', '1/2', '5.7', '8', area].map((cell, c) => (
                                        <td key={c} className="border-r border-b border-[#f0eef1] py-0 pr-0 pl-[2px]">{cell}</td>
                                    ))}
                                </tr>
                            ))}
                        </tbody>
                    </table>
                </div>
                <div className="flex w-[11px] flex-col bg-[#eef2fb]">
                    <ScrollButton label="Scroll up" d="M1.500 5L4 2.500L6.500 5" />
                    <div className="flex h-[54px] flex-col items-center justify-center gap-px rounded-[1px] border border-[#a9c0e6] bg-[#c9dbf8]">
                        <span className="h-px w-1 bg-[#8ea8d8]" />
                        <span className="h-px w-1 bg-[#8ea8d8]" />
                        <span className="h-px w-1 bg-[#8ea8d8]" />
                    </div>
                    <ScrollButton label="Scroll down" className="mt-auto" d="M1.500 3L4 5.500L6.500 3" />
                </div>
            </div>
            <div className="flex h-[11px] bg-[#e9e5ea]">
                <ScrollButton label="Scroll left" d="M5 1.500L2.500 4L5 6.500" />
                <div className="mr-[3px] ml-px flex flex-1 items-center justify-center gap-px rounded-[1px] border border-[#a9c0e6] bg-linear-to-b from-[#d4e4fb] to-[#b2cdf4]">
                    <span className="h-1 w-px bg-[#8ea8d8]" />
                    <span className="h-1 w-px bg-[#8ea8d8]" />
                    <span className="h-1 w-px bg-[#8ea8d8]" />
                </div>
                <ScrollButton label="Scroll right" className="mr-[11px]" d="M3 1.500L5.500 4L3 6.500" />
            </div>
        </div>
    );
}

const LABEL = 'w-[56px] shrink-0 whitespace-nowrap text-[7px]';
const FIELD = 'h-[15px] border border-[#b9bcc4] pl-[3px] text-[8px] text-[#222]';

function RemoteAreaDialog() {
    const [form, setForm] = useState({
        name: 'OPA1',
        area: '5006.0',
        height: '8.0',
        pressure: '7',
        density: '0.12',
    });

    const handleChange = (e) => {
        const { name, value } = e.target;
        setForm(current => ({ ...current, [name]: value }));
    };

    return (
        <div role="dialog" aria-label="Remote area" className="absolute top-[104px] right-0 w-[321px] overflow-hidden rounded-tl-[4px] border-b-2 border-l-[3px] border-[#3d6fc4] bg-[#e9e5ea] font-[Roboto,'Liberation_Sans',sans-serif] text-[8px] text-[#222]">
            <div className="-ml-[3px] flex h-5 items-center justify-between bg-linear-to-b from-[#6aa6ee] via-[#4482dc] to-[#2452b4] pr-[2px] pl-[3px]">
                <h1 className="font-[Lato,sans-serif] text-[9px] font-bold text-white">Remote area</h1>
                <button type="button" aria-label="Close" className="flex h-[13px] w-[13px] items-center justify-center rounded-[2px] border border-[#f0d8d0] bg-[#d8502c]">
                    <svg viewBox="0 0 8 8" className="h-2 w-2"><path d="M1 1L7 7M7 1L1 7" stroke="#fff" strokeWidth="1.500" /></svg>
                </button>
            </div>
            <div className="mt-[12px] mr-[6px] mb-[8px] ml-[5px] rounded-[2px] border border-[#dad6de] pl-[5px]">
                <h2 className="-mt-[6px] w-fit bg-[#e9e5ea] leading-[12px] text-[#4460a8]">Enter data:</h2>
                <div className="mt-[2px] flex">
                    <div className="flex w-[237px] flex-col gap-[4px]">
                        <div className="flex items-center">
                            <label htmlFor="area-name" className={LABEL}>Name:</label>
                            <input id="area-name" name="name" value={form.name} onChange={handleChange} className={classNames(FIELD, 'min-w-0 flex-1 bg-white')} />
                        </div>
                        <div className="flex items-center">
                            <label htmlFor="hazard" className={LABEL}>Fire hazard class:</label>
                            <div className="relative flex flex-1">
                                <select id="hazard" className={classNames(FIELD, 'w-full appearance-none bg-white')}>
                                    <option>High Hazard, Process -HHP1</option>
                                </select>
                                <ComboArrow />
                            </div>
                        </div>
                        <div className="flex items-center">
                            <label htmlFor="area" className={LABEL}>Area:</label>
                            <input id="area" name="area" value={form.area} readOnly className={classNames(FIELD, 'w-[35px] bg-[#e9e5ea]')} />
                            <span className="w-[42px] pl-1 text-[7px]">sq ft</span>
                            <label htmlFor="height" className="w-[36px] text-[7px]">Height:</label>
                            <input id="height" name="height" value={form.height} readOnly className={classNames(FIELD, 'w-[35px] bg-[#e9e5ea]')} />
                            <span className="pl-[5px] text-[7px]">ft</span>
                        </div>
                        <div className="flex items-center">
                            <label htmlFor="pressure" className={LABEL}>min Pressure:</label>
                            <input id="pressure" name="pressure" value={form.pressure} onChange={handleChange} className={classNames(FIELD, 'w-[35px] bg-white')} />
                            <span className="w-[42px] pl-1 text-[7px]">psi</span>
                            <label htmlFor="density" className="w-[36px] text-[7px]">Density:</label>
                            <input id="density" name="density" value={form.density} onChange={handleChange} className={classNames(FIELD, 'w-[35px] bg-white')} />
                            <span className="w-0 pl-[5px] text-[7px] whitespace-nowrap">gpm/sq ft</span>
                        </div>
                        <div className="flex items-center">
                            <label htmlFor="shield" className={LABEL}>Shieldarea:</label>
                            <div className="relative flex flex-1">
                                <select id="shield" className={classNames(FIELD, 'w-full appearance-none bg-white')}>
                                    <option>from Drawing</option>
                                </select>
                                <ComboArrow />
                            </div>
                        </div>
                    </div>
                    <div className="ml-2 flex w-[47px] flex-col gap-1">
                        <button type="button" className="h-4 rounded-[1px] border border-[#3c5a8c] bg-[#f4f0ea] leading-none ring-1 ring-[#e2b860] ring-inset">OK</button>
                        <button type="button" className="h-4 rounded-[1px] border border-[#3c5a8c] bg-[#edf0f6] leading-none ring-1 ring-[#a9c4ec] ring-inset">Cancel</button>
                    </div>
                </div>
                <div className="pl-[2px]"><SprinklerTable /></div>
                <p className="mt-[6px] mb-[5px] -ml-1 text-[7px] leading-[12px] whitespace-pre">Note: Double click on row = Zoom to drawing,  Red row = Coverage area exceeded</p>
            </div>
            {/* mouse pointer */}
            <svg viewBox="0 0 10 16" className="absolute top-[47px] left-[261px] h-4 w-2.5">
                <path d="M1 1V12L4 10L6 15L8 14L6 9H9Z" fill="#fff" stroke="#222" />
            </svg>
        </div>
    );
}

function ModelTabs() {
    return (
        <div className="flex h-[14px] shrink-0 items-center border-t border-[#8a888e] bg-[#e6e3e8] text-[8px]">
            {['M3 2V8M8 2L5 5L8 8Z', 'M7 2L4 5L7 8Z', 'M4 2L7 5L4 8Z', 'M8 2V8M3 2L6 5L3 8Z'].map(d => (
                <button key={d} type="button" aria-label="Browse layouts" className="h-[10px] w-[10px] border-r border-[#ccc]">
                    <svg viewBox="0 0 10 10" className="h-full w-full"><path d={d} fill="#aaa8ae" stroke="#aaa8ae" /></svg>
                </button>
            ))}
            <div className="relative h-full">
                <svg viewBox="0 0 70 12" className="h-3 w-[70px]">
                    <path d="M29 12L33 0M63 12L67 0" stroke="#777" />
                    <path d="M0 0H33L29 12H4Z" fill="#000" />
                </svg>
                <div className="absolute inset-0 flex items-center leading-none">
                    <button type="button" className="pl-[5px] font-bold text-white">Model</button>
                    <button type="button" className="pl-[7px]">Layout1</button>
                </div>
            </div>
        </div>
    );
}

const MODES = [
    ['SNAP', true], ['GRID', false], ['ORTHO', false], ['POLAR', true], ['OSNAP', false],
    ['OTRACK', false], ['DUCS', false], ['DYN', true], ['LWT', false], ['MODEL', true],
];

function StatusBar() {
    return (
        <footer className="flex h-[18px] shrink-0 items-center border-t border-[#bdbabf] bg-[#e9ecf0] pl-[3px] text-[8px]">
            <div className="h-[13px] w-[84px] border border-[#b9bcc2] pl-px leading-[11px] whitespace-pre">95'-0",   -11'-6" , 8'-8"</div>
            <div className="ml-1 flex">
                {MODES.map(([mode, on]) => (
                    <button
                        key={mode}
                        type="button"
                        className={classNames('h-[13px] px-px leading-[11px]', on ? 'border-t border-l border-[#444] bg-[#f4f5f8]' : 'border-r border-[#b9bcc2]')}
                    >
                        {mode}
                    </button>
                ))}
            </div>
        </footer>
    );
}

export default function App() {
    return (
        <div className="h-screen overflow-hidden bg-black px-11 font-[Lato,'Liberation_Sans',sans-serif] text-[#222]">
            <div className="flex h-full flex-col border-b-2 border-l-2 border-[#5f9be0] bg-[#e8e4e9]">
                <header className="-ml-[2px] flex h-[21px] shrink-0 items-center bg-linear-to-b from-[#4a74b8] via-[#5488cc] to-[#7cc0ea] pt-1 pl-1">
                    <svg viewBox="0 0 10 10" className="h-[11px] w-[10px]">
                        <path d="M0 0H10V10H0Z" fill="#1f7a78" />
                        <path d="M2 4L5 1L5 4M6 2H8V4M1 9Q4 5 4 9M6 6H9V9H6Z" fill="none" stroke="#e8f4e8" />
                    </svg>
                    <h1 className="ml-[2px] text-[9px] font-bold text-white">AutoCAD 2008 - [C:\Projects\CATS\presentaion.dwg]</h1>
                </header>
                <nav className="flex h-[14px] shrink-0 items-center gap-1 pl-[2px] text-[8px] text-[#a8a3a9]">
                    <svg viewBox="0 0 10 12" className="h-3 w-[10px]">
                        <path d="M1 2H6L9 6V11H1Z" fill="#2a58b0" />
                        <path d="M0 8L4 5L9 9V12H0Z" fill="#e8cc30" />
                        <path d="M5 1L7 3" stroke="#222" />
                    </svg>
                    {MENUS.map(menu => <button key={menu} type="button">{menu}</button>)}
                </nav>
                <Toolbars />
                <div className="flex min-h-0 flex-1 pt-[2px]">
                    <Palette />
                    <div className="ml-[4px] flex min-w-0 flex-1 flex-col border-l-2 border-[#8a888e]">
                        <div className="relative min-h-0 flex-1 border-t border-[#555] bg-black">
                            <FloorPlan />
                            <RemoteAreaDialog />
                        </div>
                        <ModelTabs />
                        <div className="h-5 shrink-0 bg-[#edf0f6]" />
                        <div className="flex h-[42px] shrink-0 border-t-2 border-[#4a484e] pt-[7px]">
                            <div className="ml-[3px] w-[3px] border-x border-[#c0bec4]" />
                            <div className="ml-[3px] flex-1 border-t-2 border-l-2 border-[#555] bg-white">
                                <p className="h-[17px] border-b border-[#c0bec4] font-['Liberation_Mono',monospace] text-[9px] leading-[12px]">40 Sprinklers selected.</p>
                                <input aria-label="Command" className="h-3 w-full" />
                            </div>
                        </div>
                    </div>
                </div>
                <StatusBar />
            </div>
        </div>
    );
}
